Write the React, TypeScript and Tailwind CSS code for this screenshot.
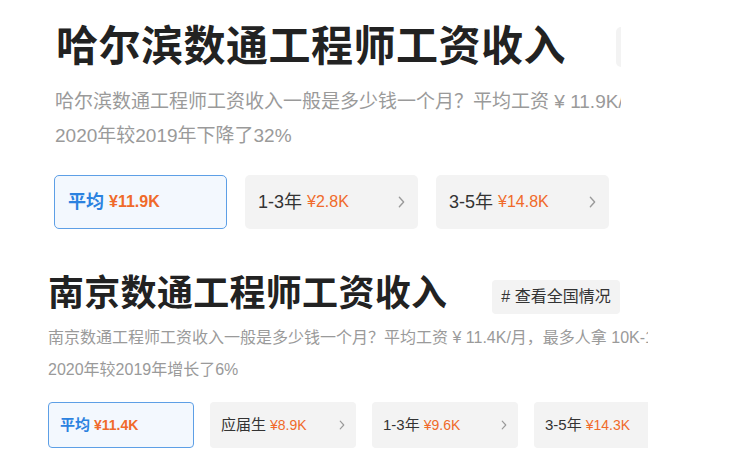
import React from "react";

type Size = "lg" | "sm";

const Chevron = ({ size }: { size: Size }) => (
  <svg
    viewBox="0 0 8 14"
    className={size === "lg" ? "w-[7px] h-[12px]" : "w-[6px] h-[10px]"}
    fill="none"
    stroke="#9a9a9a"
    strokeWidth="1.6"
    strokeLinecap="round"
    strokeLinejoin="round"
  >
    <polyline points="1.5,1.5 6.5,7 1.5,12.5" />
  </svg>
);

const SalaryCard = ({
  label,
  price,
  active = false,
  chevron = true,
  size,
}: {
  label: string;
  price: string;
  active?: boolean;
  chevron?: boolean;
  size: Size;
}) => {
  const box =
    size === "lg"
      ? "w-[173px] h-[54px] px-[13px] rounded-[5px]"
      : "w-[146px] h-[46px] px-[11px] rounded-[4px]";
  const labelText = size === "lg" ? "text-[18px]" : "text-[15px]";
  const priceText = size === "lg" ? "text-[16px] ml-[5px]" : "text-[14px] ml-[4px]";

  return (
    <div
      className={`${box} shrink-0 flex items-center justify-between ${
        active
          ? "border border-[#5d9fe6] bg-[#f3f8fe]"
          : "bg-[#f3f3f3]"
      }`}
    >
      <div className="flex items-center whitespace-nowrap">
        <span
          className={`${labelText} ${
            active ? "text-[#2b82e0] font-bold" : "text-[#333]"
          }`}
        >
          {label}
        </span>
        <span
          className={`${priceText} text-[#f06a2a] ${active ? "font-bold" : ""}`}
        >
          {price}
        </span>
      </div>
      {chevron && !active && <Chevron size={size} />}
    </div>
  );
};

export default function App() {
  return (
    <div className="w-[731px] h-[475px] bg-white overflow-hidden font-['Liberation_Sans','Noto_Sans_CJK_SC',sans-serif]">
      {/* 哈尔滨 */}
      <div className="w-[621px] overflow-hidden pl-[54px] pt-[24px]">
        <div className="flex items-center h-[46px] whitespace-nowrap">
          <h1 className="ml-[2px] text-[42px] leading-[46px] font-bold tracking-[0.5px] text-[#222]">
            哈尔滨数通工程师工资收入
          </h1>
          <span className="ml-[50px] h-[40px] px-[11px] flex items-center bg-[#f3f3f3] rounded-[5px] text-[19px] text-[#333]">
            # 查看全国情况
          </span>
        </div>
        <div className="mt-[15px] ml-[1px] text-[19px] leading-[34px] text-[#9a9a9a] whitespace-nowrap">
          <p>
            哈尔滨数通工程师工资收入一般是多少钱一个月？平均工资 ¥ 11.9K/月，最多人拿 10K-15K/月，
          </p>
          <p>2020年较2019年下降了32%</p>
        </div>
        <div className="mt-[22px] flex gap-[18px]">
          <SalaryCard size="lg" label="平均" price="¥11.9K" active />
          <SalaryCard size="lg" label="1-3年" price="¥2.8K" />
          <SalaryCard size="lg" label="3-5年" price="¥14.8K" />
        </div>
      </div>

      {/* 南京 */}
      <div className="w-[648px] overflow-hidden pl-[48px] mt-[45px]">
        <div className="flex items-center h-[40px] whitespace-nowrap">
          <h1 className="text-[36px] leading-[40px] font-bold tracking-[0.3px] text-[#222]">
            南京数通工程师工资收入
          </h1>
          <span className="ml-[45px] mt-[6px] h-[34px] px-[9px] flex items-center bg-[#f3f3f3] rounded-[4px] text-[16px] text-[#333]">
            # 查看全国情况
          </span>
        </div>
        <div className="mt-[8px] text-[16px] leading-[32px] text-[#9a9a9a] whitespace-nowrap">
          <p>
            南京数通工程师工资收入一般是多少钱一个月？平均工资 ¥ 11.4K/月，最多人拿 10K-15K/月，
          </p>
          <p>2020年较2019年增长了6%</p>
        </div>
        <div className="mt-[16px] flex gap-[16px]">
          <SalaryCard size="sm" label="平均" price="¥11.4K" active />
          <SalaryCard size="sm" label="应届生" price="¥8.9K" />
          <SalaryCard size="sm" label="1-3年" price="¥9.6K" />
          <SalaryCard size="sm" label="3-5年" price="¥14.3K" />
        </div>
      </div>
    </div>
  );
}
